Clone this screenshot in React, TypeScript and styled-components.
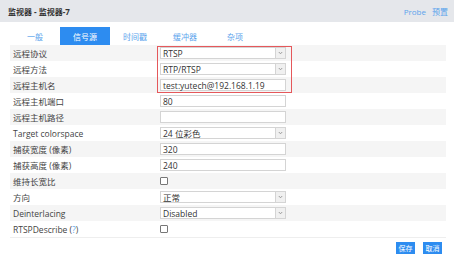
import { ReactElement } from 'react';
import styled, { createGlobalStyle } from 'styled-components';

const BLUE = '#2d8cf0';
const LINK = '#5ba3ec';

const GlobalStyle = createGlobalStyle`
  body {
    margin: 0;
    background: #ffffff;
    font-family: 'Open Sans', 'Noto Sans CJK SC', sans-serif;
    font-size: 8px;
    color: #333333;
  }
`;

const Page = styled.div`
  width: 454px;
  height: 264px;
  overflow: hidden;
`;

const Header = styled.div`
  height: 22px;
  background: #e5e7eb;
  display: flex;
  align-items: center;
  justify-content: space-between;
  padding: 0 6px 0 8px;
`;

const Title = styled.div`
  font-weight: bold;
  font-size: 8px;
  color: #333;
`;

const HeaderLinks = styled.div`
  display: flex;
  gap: 6px;
  color: ${LINK};
`;

const Tabs = styled.div`
  height: 23px;
  display: flex;
  align-items: flex-end;
  padding-left: 10px;
`;

const Tab = styled.div<{ $active?: boolean }>`
  width: 50px;
  height: 18px;
  display: flex;
  align-items: center;
  justify-content: center;
  color: ${(p) => (p.$active ? '#ffffff' : LINK)};
  background: ${(p) => (p.$active ? BLUE : 'transparent')};
`;

const Table = styled.div`
  position: relative;
  margin: 0 8px 0 10px;
  border-bottom: 1px solid #eeeeee;
`;

const Row = styled.div<{ $odd: boolean }>`
  height: 16px;
  display: flex;
  align-items: center;
  background: ${(p) => (p.$odd ? '#f5f5f5' : '#ffffff')};
`;

const Label = styled.div`
  width: 147px;
  padding-left: 3px;
  white-space: nowrap;
  font-size: 8.5px;
  color: #444;
`;

const Help = styled.span`
  color: ${LINK};
`;

const Field = styled.div`
  width: 126px;
  height: 12px;
  box-sizing: border-box;
  border: 1px solid #d4d4d4;
  background: #ffffff;
  display: flex;
  align-items: center;
  padding-left: 2px;
  position: relative;
  font-size: 8.5px;
`;

const Arrow = styled.div`
  position: absolute;
  right: 0;
  top: 0;
  bottom: 0;
  width: 9px;
  border-left: 1px solid #d4d4d4;
  background: #f0f0f0;
  display: flex;
  align-items: center;
  justify-content: center;
`;

const Check = styled.div`
  width: 6px;
  height: 6px;
  border: 1px solid #777;
  border-radius: 1px;
  background: #fff;
`;

const Highlight = styled.div`
  position: absolute;
  left: 147px;
  top: 1px;
  width: 135px;
  height: 47px;
  box-sizing: border-box;
  border: 1.5px solid #e5585b;
  pointer-events: none;
`;

const Footer = styled.div`
  display: flex;
  justify-content: flex-end;
  gap: 8px;
  padding: 4px 12px 0 0;
`;

const Button = styled.div`
  width: 19px;
  height: 12px;
  background: ${BLUE};
  color: #fff;
  font-size: 7px;
  display: flex;
  align-items: center;
  justify-content: center;
`;

type Cell = { kind: 'select' | 'text' | 'check'; value?: string };

const rows: { label: ReactElement | string; cell: Cell }[] = [
  { label: '远程协议', cell: { kind: 'select', value: 'RTSP' } },
  { label: '远程方法', cell: { kind: 'select', value: 'RTP/RTSP' } },
  { label: '远程主机名', cell: { kind: 'text', value: 'test:yutech@192.168.1.19' } },
  { label: '远程主机端口', cell: { kind: 'text', value: '80' } },
  { label: '远程主机路径', cell: { kind: 'text', value: '' } },
  { label: 'Target colorspace', cell: { kind: 'select', value: '24 位彩色' } },
  { label: '捕获宽度 (像素)', cell: { kind: 'text', value: '320' } },
  { label: '捕获高度 (像素)', cell: { kind: 'text', value: '240' } },
  { label: '维持长宽比', cell: { kind: 'check' } },
  { label: '方向', cell: { kind: 'select', value: '正常' } },
  { label: 'Deinterlacing', cell: { kind: 'select', value: 'Disabled' } },
  {
    label: (
      <>
        RTSPDescribe (<Help>?</Help>)
      </>
    ),
    cell: { kind: 'check' },
  },
];

const Chevron = (): ReactElement => (
  <svg width="5" height="4" viewBox="0 0 5 4">
    <path d="M0.8 1 L2.5 2.8 L4.2 1" fill="none" stroke="#888" strokeWidth="0.8" />
  </svg>
);

const renderCell = (cell: Cell): ReactElement => {
  if (cell.kind === 'check') return <Check />;
  return (
    <Field>
      {cell.value}
      {cell.kind === 'select' && (
        <Arrow>
          <Chevron />
        </Arrow>
      )}
    </Field>
  );
};

const App = (): ReactElement => {
  return (
    <Page>
      <GlobalStyle />
      <Header>
        <Title>监视器 - 监视器-7</Title>
        <HeaderLinks>
          <span>Probe</span>
          <span>预置</span>
        </HeaderLinks>
      </Header>
      <Tabs>
        <Tab>一般</Tab>
        <Tab $active>信号源</Tab>
        <Tab>时间戳</Tab>
        <Tab>缓冲器</Tab>
        <Tab>杂项</Tab>
      </Tabs>
      <Table>
        {rows.map((row, i) => (
          <Row key={i} $odd={i % 2 === 0}>
            <Label>{row.label}</Label>
            {renderCell(row.cell)}
          </Row>
        ))}
        <Highlight />
      </Table>
      <Footer>
        <Button>保存</Button>
        <Button>取消</Button>
      </Footer>
    </Page>
  );
};

export default App;
